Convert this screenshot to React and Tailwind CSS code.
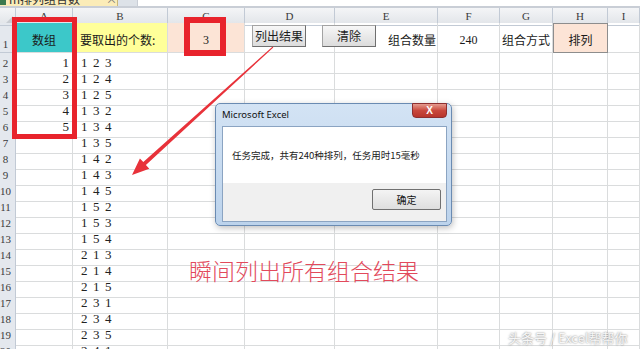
import React from "react";

// column widths measured off the sheet: row header, A..I
const COLS = "grid grid-cols-[16px_57px_95px_77px_90px_103px_62px_53px_55px_1fr]";
const SERIF = "font-['Liberation_Serif','Noto_Sans_CJK_SC',serif]";
const CJK = "font-['Noto_Sans_CJK_SC','Noto_Sans',sans-serif]";
const GRID = "border-r border-b border-[#dadcdd]";

function permutations() {
  const nums = [1, 2, 3, 4, 5];
  const out = [];
  for (const a of nums)
    for (const b of nums)
      for (const c of nums) if (a !== b && b !== c && a !== c) out.push([a, b, c]);
  return out;
}

function RowHead({ children, className = "" }) {
  return (
    <div
      className={`flex justify-center pr-[4px] bg-[#e4e8ee] border-r border-b border-[#c2cad5] text-[11px] text-[#3a3a3a] ${SERIF} ${className}`}
    >
      {children}
    </div>
  );
}

function DataRow({ num, a, combo }) {
  return (
    <div className={`${COLS} h-[16px]`}>
      <RowHead className="items-center">{num}</RowHead>
      <div className={`${GRID} flex items-center justify-end pr-[3px] text-[13px] text-[#222] ${SERIF}`}>{a}</div>
      <div className={`${GRID} flex items-center pl-[8px] text-[13px] text-[#222] ${SERIF}`}>
        {combo.map((d, i) => (
          <span key={i} className="w-[12px]">
            {d}
          </span>
        ))}
      </div>
      {[0, 1, 2, 3, 4, 5, 6].map((i) => (
        <div key={i} className={GRID} />
      ))}
    </div>
  );
}

function SheetButton({ label, className }) {
  return (
    <div
      className={`absolute h-[22px] w-[54px] flex items-center justify-center bg-gradient-to-b from-[#f7f7f7] to-[#dcdcdc] border border-[#a3a3a3] border-b-[#6f6f6f] border-r-[#6f6f6f] text-[12px] text-[#1e1e1e] ${CJK} ${className}`}
    >
      {label}
    </div>
  );
}

export default function App() {
  const combos = permutations();
  const rows = [];
  for (let n = 2; n <= 20; n++) {
    rows.push(<DataRow key={n} num={n} a={n <= 6 ? n - 1 : ""} combo={combos[n - 2]} />);
  }

  return (
    <div className="relative w-[640px] h-[349px] overflow-hidden bg-white">
      {/* workbook tab strip, mostly cut off at the top */}
      <div className="flex h-[8px] border-b-2 border-[#c9ced6]">
        <div className={`relative w-[118px] overflow-hidden bg-[#fbecb8] border-r border-[#c9b77a] ${CJK}`}>
          <div className="absolute left-[0px] top-[-7px] w-[6px] h-[12px] bg-[#3c7a4e]" />
          <span className="absolute left-[9px] top-[-10px] text-[12px] text-[#333]">m排列组合数组.xlsm</span>
          <span className="absolute left-[106px] top-[-9px] text-[11px] text-[#777]">×</span>
        </div>
        <div className="w-[19px] bg-[#dde2e8]" />
        <div className="flex-1 bg-white border-l border-[#c9ced6]" />
      </div>

      {/* column headers */}
      <div className={`${COLS} h-[15px] bg-gradient-to-b from-[#f4f5f7] to-[#e3e6ea]`}>
        <div className="relative border-r border-b border-[#c2cad5]">
          <div className="absolute right-[2px] bottom-[2px] w-0 h-0 border-l-[7px] border-l-transparent border-b-[7px] border-b-[#c8ccd2]" />
        </div>
        {["A", "B", "C", "D", "E", "F", "G", "H", "I"].map((c) => (
          <div
            key={c}
            className={`flex items-center justify-center border-r border-b border-[#c2cad5] text-[11px] text-[#3a3a3a] ${SERIF}`}
          >
            {c}
          </div>
        ))}
      </div>

      {/* row 1 */}
      <div className={`${COLS} h-[30px] text-[12px] text-[#1a1a1a] ${CJK}`}>
        <RowHead className="items-end">1</RowHead>
        <div className={`${GRID} bg-[#3cc8c9] flex items-center justify-center pt-[4px]`}>数组</div>
        <div className={`${GRID} bg-[#ffff99] flex items-center pl-[7px] pt-[4px]`}>要取出的个数:</div>
        <div className={`${GRID} bg-[#fce4d6] flex items-center justify-center pt-[4px] ${SERIF}`}>3</div>
        <div className={GRID} />
        <div className={`${GRID} flex items-center justify-end pr-[1px] pt-[4px]`}>组合数量</div>
        <div className={`${GRID} flex items-center justify-center pt-[4px] ${SERIF}`}>240</div>
        <div className={`${GRID} flex items-center pl-[2px] pt-[4px]`}>组合方式</div>
        <div className="bg-[#fce4d6] border border-[#8d8d8d] flex items-center justify-center pt-[4px]">排列</div>
        <div className={GRID} />
      </div>

      {rows}

      {/* form buttons on the sheet */}
      <SheetButton label="列出结果" className="left-[252px] top-[25px]" />
      <SheetButton label="清除" className="left-[322px] top-[25px]" />

      {/* red highlight boxes */}
      <div className="absolute left-[12px] top-[17px] w-[65px] h-[122px] border-[5px] border-[#e8232c]" />
      <div className="absolute left-[184px] top-[17px] w-[42px] h-[39px] border-[6px] border-[#e8232c]" />

      {/* arrow */}
      <svg className="absolute inset-0 pointer-events-none" width="640" height="349" viewBox="0 0 640 349">
        <polygon
          fill="#e8323a"
          points="273.3,47.4 145.9,165.1 149.3,168.8 132,175 139.9,158.4 143.3,162.1 272.7,46.6"
        />
      </svg>

      {/* message box */}
      <div className="absolute left-[215px] top-[103px] w-[237px] h-[123px] flex flex-col rounded-[5px] border border-[#6a8bb2] bg-gradient-to-b from-[#d3e3f4] to-[#bcd3ec] shadow-[1px_2px_6px_rgba(0,0,0,0.25)]">
        <div className="relative h-[22px] flex items-center pl-[6px] text-[9.5px] text-[#111] font-['Noto_Sans','Open_Sans',sans-serif]">
          Microsoft Excel
          <div className="absolute right-[4px] top-[-1px] w-[35px] h-[15px] flex items-center justify-center rounded-b-[4px] border border-[#8e2f2f] bg-gradient-to-b from-[#e49a8f] via-[#c9483d] to-[#b8352c] text-[10px] font-bold text-white font-['Liberation_Sans',sans-serif]">
            X
          </div>
        </div>
        <div className="ml-[6px] mr-[4px] mb-[3px] flex-1 flex flex-col border border-[#8ba4c2]">
          <div className={`h-[56px] bg-white flex items-center pl-[9px] text-[9.5px] text-[#1a1a1a] ${CJK}`}>
            任务完成，共有240种排列，任务用时15毫秒
          </div>
          <div className="flex-1 bg-[#f0f0f0] flex justify-end items-start pt-[6px] pr-[5px]">
            <div className={`w-[69px] h-[21px] flex items-center justify-center rounded-[2px] border border-[#707070] bg-gradient-to-b from-[#f4f4f4] to-[#dedede] text-[10px] text-[#111] ${CJK}`}>
              确定
            </div>
          </div>
        </div>
      </div>

      {/* caption */}
      <div className={`absolute left-[189px] top-[255px] text-[23px] leading-[30px] font-light text-[#e24a5c] ${CJK}`}>
        瞬间列出所有组合结果
      </div>

      {/* watermark */}
      <div
        className={`absolute left-[508px] top-[329px] text-[13px] leading-[18px] text-[#f6f6f6] [text-shadow:0_0_2px_rgba(0,0,0,0.55)] ${CJK}`}
      >
        头条号 / Excel帮帮你
      </div>
    </div>
  );
}
